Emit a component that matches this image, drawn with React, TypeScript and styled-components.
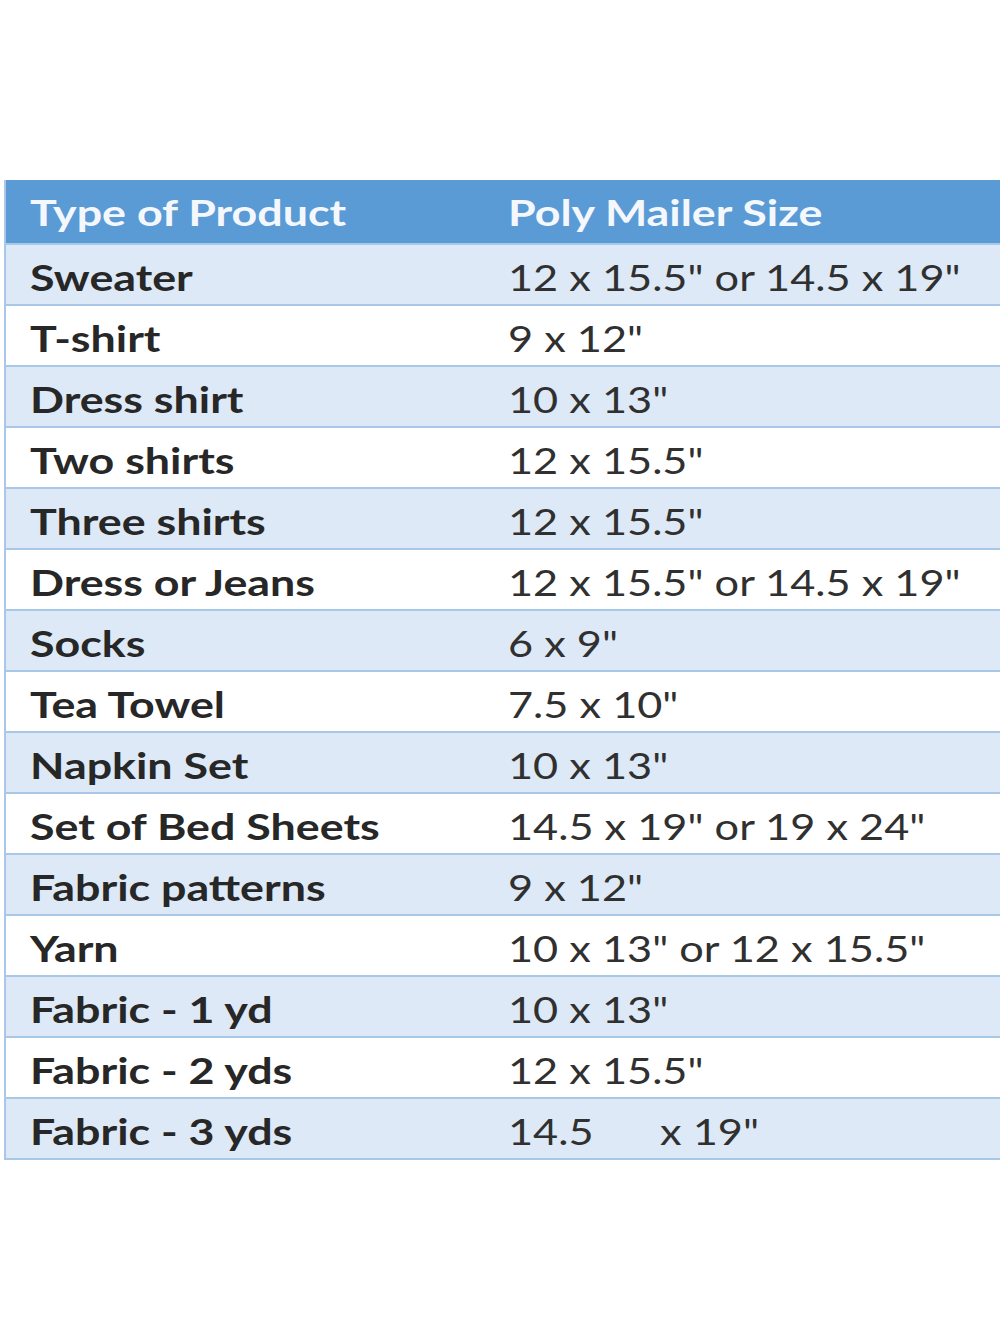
import React from "react";
import styled, { createGlobalStyle } from "styled-components";

const Global = createGlobalStyle`
  html, body { margin: 0; padding: 0; background: #ffffff; overflow-x: hidden; }
  body { font-family: Lato, "Open Sans", sans-serif; }
`;

const Page = styled.div`
  width: 1000px;
  height: 1333px;
  padding-top: 180px;
  padding-left: 4px;
  box-sizing: border-box;
  overflow: hidden;
`;

const Table = styled.div`
  width: 1000px;
  display: grid;
  grid-template-columns: 478px 1fr;
  border-left: 2px solid #a9c8e8;
  border-bottom: 2px solid #a9c8e8;
`;

const HeaderCell = styled.div`
  height: 63px;
  background: #5b9bd5;
  color: #f4f8fd;
  font-weight: 700;
  font-size: 37px;
  display: flex;
  align-items: center;
  padding-left: 24px;
  box-sizing: border-box;
`;

const Cell = styled.div<{ $alt: boolean; $bold?: boolean }>`
  height: 61px;
  background: ${(p) => (p.$alt ? "#dde9f6" : "#ffffff")};
  border-top: 2px solid #a9c8e8;
  color: ${(p) => (p.$bold ? "#272727" : "#303030")};
  font-weight: ${(p) => (p.$bold ? 700 : 400)};
  font-size: 37px;
  display: flex;
  align-items: center;
  padding-left: 24px;
  padding-top: 4px;
  box-sizing: border-box;
  white-space: pre;
`;

const Label = styled.span<{ $stretch: number }>`
  display: inline-block;
  transform: scaleX(${(p) => p.$stretch});
  transform-origin: left center;
`;

const rows: [string, string][] = [
  ["Sweater", '12 x 15.5" or 14.5 x 19"'],
  ["T-shirt", '9 x 12"'],
  ["Dress shirt", '10 x 13"'],
  ["Two shirts", '12 x 15.5"'],
  ["Three shirts", '12 x 15.5"'],
  ["Dress or Jeans", '12 x 15.5" or 14.5 x 19"'],
  ["Socks", '6 x 9"'],
  ["Tea Towel", '7.5 x 10"'],
  ["Napkin Set", '10 x 13"'],
  ["Set of Bed Sheets", '14.5 x 19" or 19 x 24"'],
  ["Fabric patterns", '9 x 12"'],
  ["Yarn", '10 x 13" or 12 x 15.5"'],
  ["Fabric - 1 yd", '10 x 13"'],
  ["Fabric - 2 yds", '12 x 15.5"'],
  ["Fabric - 3 yds", '14.5      x 19"'],
];

export default function App() {
  return (
    <>
      <Global />
      <Page>
        <Table>
          <HeaderCell>
            <Label $stretch={1.21}>Type of Product</Label>
          </HeaderCell>
          <HeaderCell>
            <Label $stretch={1.21}>Poly Mailer Size</Label>
          </HeaderCell>
          {rows.map(([a, b], i) => (
            <React.Fragment key={a}>
              <Cell $alt={i % 2 === 0} $bold>
                <Label $stretch={1.21}>{a}</Label>
              </Cell>
              <Cell $alt={i % 2 === 0}>
                <Label $stretch={1.17}>{b}</Label>
              </Cell>
            </React.Fragment>
          ))}
        </Table>
      </Page>
    </>
  );
}
